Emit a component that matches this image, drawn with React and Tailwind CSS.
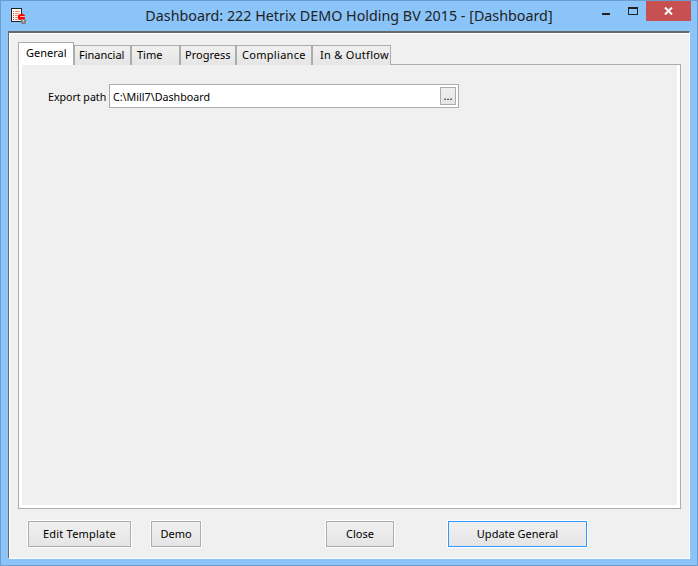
import React from 'react';

function AppIcon() {
    return (
        <svg width="17" height="17" viewBox="0 0 17 17" className="block">
            <rect x="0.5" y="0.5" width="10" height="13" fill="#fff" stroke="#222" />
            <path d="M2 3.5h1M2 5.5h1M2 7.5h1M2 9.5h1M2 11.5h1" stroke="#e8401f" />
            <path d="M4 3.5h5M4 5.5h4M4 7.5h3M4 9.5h3M4 11.5h4" stroke="#ef8a66" />
            <rect x="7" y="6" width="7" height="6" rx="2.5" fill="#f00" />
            <rect x="9" y="8" width="5" height="1" fill="#ffb0b0" />
            <rect x="10" y="11" width="5" height="5" rx="1" fill="#858585" />
            <rect x="12" y="12" width="1" height="2" fill="#d0d0d0" />
        </svg>
    );
}

function Tab({ label, w, cls }) {
    return (
        <div className={`${w} ${cls} h-[20px] mt-[3px] border border-b-0 border-[#acacac] bg-gradient-to-b from-[#f0f0f0] to-[#e5e5e5] text-[11px] leading-[17px] text-black whitespace-nowrap`}>
            {label}
        </div>
    );
}

function Btn({ label, w, focused, cls }) {
    return (
        <button className={`${w} ${cls} h-[26px] border ${focused ? 'border-[#3399ff]' : 'border-[#acacac]'} outline outline-1 outline-white bg-gradient-to-b from-[#f0f0f0] to-[#e5e5e5] text-[11px] leading-[24px] text-black text-center`}>
            {label}
        </button>
    );
}

export default function App() {
    return (
        <div className="w-[698px] h-[566px] flex flex-col bg-[#8ac4f9] border border-[#6b9ccb] font-['Noto_Sans',sans-serif] overflow-hidden">
            {/* title bar */}
            <div className="h-[30px] shrink-0 grid grid-cols-[1fr_auto_1fr]">
                <div className="pl-[10px] pt-[7px]">
                    <AppIcon />
                </div>
                <div className="text-[14.3px] leading-[28px] pt-[1px] text-[#222] whitespace-nowrap">
                    Dashboard: 222 Hetrix DEMO Holding BV 2015 - [Dashboard]
                </div>
                <div className="flex justify-end pr-[6px] items-start">
                    <div className="w-[26px] h-[20px] flex justify-center pt-[12px] pr-[2px]">
                        <div className="w-[8px] h-[2px] bg-[#222]" />
                    </div>
                    <div className="w-[26px] h-[20px] flex justify-center pt-[6px]">
                        <div className="w-[10px] h-[8px] border border-t-2 border-[#222]" />
                    </div>
                    <div className="w-[45px] h-[20px] bg-[#c75050] flex items-center justify-center">
                        <svg width="9" height="8" viewBox="0 0 9 8">
                            <path d="M1 0.5 L8 7.5 M8 0.5 L1 7.5" stroke="#fff" strokeWidth="2" />
                        </svg>
                    </div>
                </div>
            </div>

            {/* client area */}
            <div className="mx-[7px] mb-[7px] flex-1 flex flex-col bg-[#f0f0f0] border-t-2 border-l border-t-[#696969] border-l-[#696969] border-r border-b border-r-white border-b-white shadow-[inset_1px_1px_0_#fff]">
                <div className="flex-1 flex flex-col pl-[9px] pr-[8px] pt-[9px]">
                    <div className="flex h-[23px] relative z-10">
                        <div className="w-[56px] h-[23px] border border-b-0 border-[#acacac] bg-white pl-[7px] text-[11px] leading-[20px] text-black">
                            General
                        </div>
                        <Tab label="Financial" w="w-[57px]" cls="pl-[4px]" />
                        <Tab label="Time" w="w-[49px]" cls="pl-[5px]" />
                        <Tab label="Progress" w="w-[56px]" cls="pl-[4px]" />
                        <Tab label="Compliance" w="w-[76px]" cls="pl-[5px] tracking-[0.3px]" />
                        <Tab label="In & Outflow" w="w-[79px]" cls="pl-[7px] tracking-[0.3px]" />
                    </div>
                    <div className="h-[445px] -mt-[1px] border border-[#acacac] bg-white p-[3px] pt-0">
                        <div className="h-full bg-[#f0f0f0] pt-[19px] pl-[26px] flex items-start">
                            <div className="w-[61px] text-[10.6px] leading-[26px] text-black whitespace-nowrap">Export path</div>
                            <div className="w-[350px] h-[24px] border border-[#acacac] bg-white flex items-center justify-between pl-[3px] pr-[2px]">
                                <span className="text-[10.7px] leading-[22px] pt-[2px] text-black">C:\Mill7\Dashboard</span>
                                <div className="w-[16px] h-[18px] border border-[#acacac] bg-gradient-to-b from-[#f0f0f0] to-[#e5e5e5] text-[11px] leading-[16px] text-center text-black">...</div>
                            </div>
                        </div>
                    </div>
                </div>
                <div className="h-[49px] flex items-start pt-[12px] pl-[19px]">
                    <Btn label="Edit Template" w="w-[103px]" cls="tracking-[0.2px]" />
                    <div className="w-[20px]" />
                    <Btn label="Demo" w="w-[50px]" />
                    <div className="w-[125px]" />
                    <Btn label="Close" w="w-[68px]" />
                    <div className="w-[54px]" />
                    <Btn label="Update General" w="w-[139px]" focused />
                </div>
            </div>
        </div>
    );
}
